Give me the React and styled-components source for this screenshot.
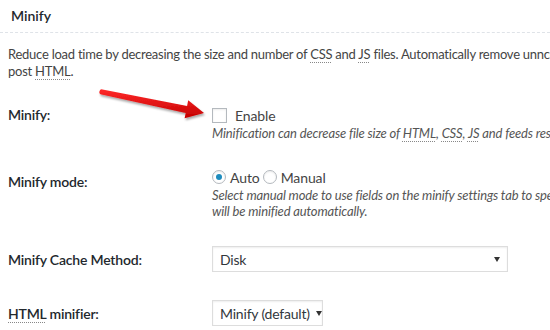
import React from "react";
import styled, { createGlobalStyle } from "styled-components";

const Global = createGlobalStyle`
  html, body { margin: 0; padding: 0; background: #fff; }
  body { font-family: Lato, "Noto Sans", sans-serif; color: #444; }
  * { box-sizing: border-box; }
`;

const Page = styled.div`
  position: relative;
  width: 550px;
  height: 330px;
  overflow: hidden;
  padding: 0 0 0 8px;
`;

const Header = styled.div`
  margin-left: -8px;
  padding: 6px 0 6px 11px;
  border-bottom: 1px dashed #dfe3e8;
  font-size: 14px;
  line-height: 20px;
  font-weight: 600;
  color: #23282d;
  height: 33px;
`;

const Intro = styled.p`
  margin: 13px 0 12px;
  font-size: 13px;
  line-height: 17px;
  letter-spacing: -0.25px;
  white-space: nowrap;
  color: #444;
`;

const Abbr = styled.abbr`
  text-decoration: underline dotted #888;
  text-underline-offset: 3px;
  text-decoration-thickness: 1px;
  border: none;
  cursor: help;
`;

const Row = styled.div`
  display: grid;
  grid-template-columns: 204px 1fr;
  padding: 13px 0;
`;

const Label = styled.div`
  padding-top: ${(p) => p.$offset || 0}px;
  font-size: 14px;
  line-height: 20px;
  font-weight: 600;
  letter-spacing: -0.2px;
  color: #23282d;
  white-space: nowrap;
`;

const Value = styled.div`
  min-width: 0;
  white-space: nowrap;
`;

const Line = styled.div`
  display: flex;
  align-items: center;
  height: 20px;
  font-size: 14px;
  letter-spacing: -0.1px;
  color: #444;
`;

const Check = styled.span`
  width: 15px;
  height: 15px;
  border: 1px solid #b4b9be;
  background: #fff;
  box-shadow: inset 0 1px 2px rgba(0, 0, 0, 0.08);
  margin-right: 8px;
  flex: none;
`;

const Radio = styled.span`
  width: 14px;
  height: 14px;
  border-radius: 50%;
  border: 1px solid #b4b9be;
  background: #fff;
  box-shadow: inset 0 1px 2px rgba(0, 0, 0, 0.08);
  display: flex;
  align-items: center;
  justify-content: center;
  margin: 0 4px 0 ${(p) => p.$gap || 0}px;
  flex: none;
  &::after {
    content: "";
    display: ${(p) => (p.$checked ? "block" : "none")};
    width: 6px;
    height: 6px;
    border-radius: 50%;
    background: #1e8cbe;
  }
`;

const Desc = styled.div`
  font-size: 13px;
  line-height: 16px;
  font-style: italic;
  letter-spacing: -0.15px;
  color: #555;
`;

const Select = styled.div`
  display: flex;
  align-items: center;
  justify-content: space-between;
  gap: 6px;
  width: ${(p) => p.$width}px;
  height: 26px;
  margin: 1px 0;
  padding: 0 7px 0 7px;
  border: 1px solid #ddd;
  box-shadow: inset 0 1px 2px rgba(0, 0, 0, 0.07);
  background: #fff;
  font-size: 14px;
  letter-spacing: -0.2px;
  color: #32373c;
`;

const Caret = styled.svg`
  width: 6px;
  height: 5px;
  flex: none;
`;

const ArrowOverlay = styled.svg`
  position: absolute;
  left: 0;
  top: 0;
  width: 550px;
  height: 330px;
  pointer-events: none;
`;

function Dropdown({ value, width }) {
  return (
    <Select $width={width}>
      <span>{value}</span>
      <Caret viewBox="0 0 6 5">
        <path d="M0 0 L6 0 L3 5 Z" fill="#333" />
      </Caret>
    </Select>
  );
}

export default function App() {
  return (
    <>
      <Global />
      <Page>
        <Header>Minify</Header>
        <Intro>
          Reduce load time by decreasing the size and number of <Abbr title="Cascading Style Sheet">CSS</Abbr> and{" "}
          <Abbr title="JavaScript">JS</Abbr> files. Automatically remove unncessary data from CSS, JS, feed, page and
          <br />
          post <Abbr title="Hypertext Markup Language">HTML</Abbr>.
        </Intro>

        <Row>
          <Label>Minify:</Label>
          <Value>
            <Line>
              <Check />
              Enable
            </Line>
            <Desc>
              Minification can decrease file size of <Abbr>HTML</Abbr>, <Abbr>CSS</Abbr>, <Abbr>JS</Abbr> and feeds respectively by ~10% on average.
            </Desc>
          </Value>
        </Row>

        <Row>
          <Label $offset={5}>Minify mode:</Label>
          <Value>
            <Line>
              <Radio $checked />
              Auto
              <Radio $gap={3} />
              Manual
            </Line>
            <Desc>
              Select manual mode to use fields on the minify settings tab to specify files to be minified, otherwise files
              <br />
              will be minified automatically.
            </Desc>
          </Value>
        </Row>

        <Row>
          <Label $offset={5}>Minify Cache Method:</Label>
          <Value>
            <Dropdown value="Disk" width={296} />
          </Value>
        </Row>

        <Row>
          <Label $offset={5}>
            <Abbr>HTML</Abbr> minifier:
          </Label>
          <Value>
            <Dropdown value="Minify (default)" width={111} />
          </Value>
        </Row>

        <ArrowOverlay viewBox="0 0 550 330">
          <defs>
            <linearGradient id="redg" x1="0" y1="0" x2="0" y2="1">
              <stop offset="0" stopColor="#ff2a2a" />
              <stop offset="1" stopColor="#c40000" />
            </linearGradient>
            <filter id="sh" x="-20%" y="-50%" width="140%" height="200%">
              <feDropShadow dx="1" dy="2" stdDeviation="1.2" floodColor="#000" floodOpacity="0.35" />
            </filter>
          </defs>
          <path
            d="M101.5 94.6 L185.7 112.9 L184.6 118.3 L204 113 L188.2 100.3 L187.1 105.9 L102.5 89.4 A2.6 2.6 0 0 0 101.5 94.6 Z"
            fill="url(#redg)"
            filter="url(#sh)"
          />
        </ArrowOverlay>
      </Page>
    </>
  );
}
